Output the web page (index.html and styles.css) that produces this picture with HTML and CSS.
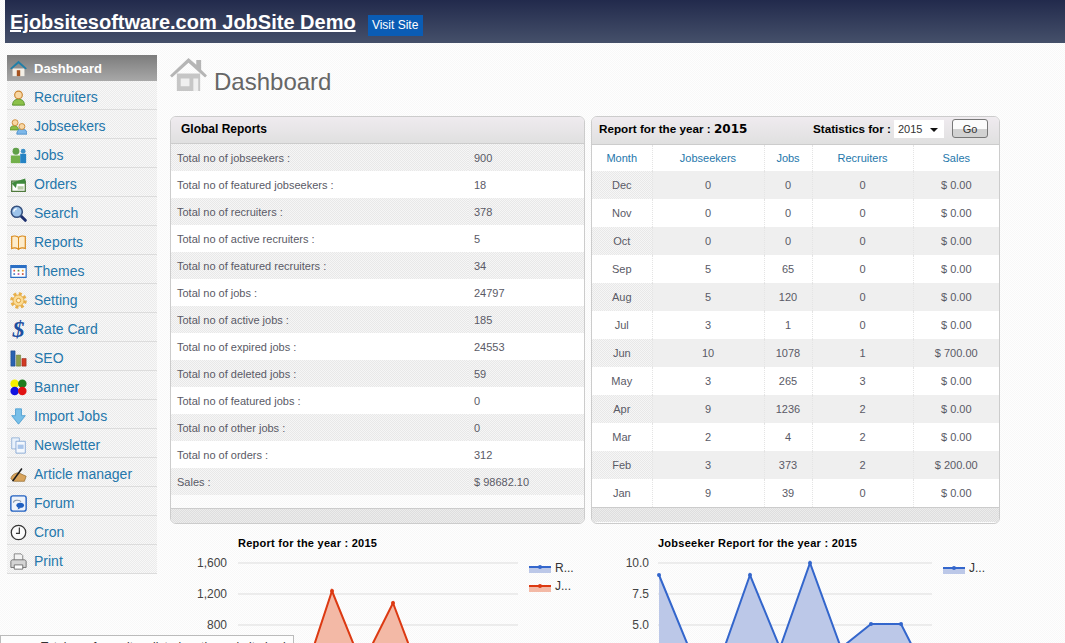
FILE: index.html
```html
<!DOCTYPE html>
<html lang="en">
<head>
<meta charset="utf-8">
<title>Dashboard</title>
<link rel="stylesheet" href="styles.css">
</head>
<body>
<header class="topbar">
  <a class="brand" href="#">Ejobsitesoftware.com JobSite Demo</a>
  <a class="visit" href="#">Visit Site</a>
</header>
<div class="layout">
  <nav class="sidebar">
    <a class="nav-item active" href="#"><svg class="ico" viewBox="0 0 20 20"><path d="M3 10h14v9H3z" fill="#f2efe6"/><path d="M8 12h4v7H8z" fill="#a5521f"/><path d="M0 10 10 1l10 9-2 1-8-7-8 7z" fill="#1f7fa8"/></svg><span>Dashboard</span></a>
    <a class="nav-item" href="#"><svg class="ico" viewBox="0 0 20 20"><path d="M3 19c0-5 3-7 7-7s7 2 7 7z" fill="#8cc14a" stroke="#4f8a22"/><circle cx="10" cy="7" r="4.500" fill="#f8d7a4" stroke="#c9822c" stroke-width="1.300"/></svg><span>Recruiters</span></a>
    <a class="nav-item" href="#"><svg class="ico" viewBox="0 0 20 20"><path d="M0 14c0-3 2-5 5-5s5 2 5 5z" fill="#8dbd45" stroke="#5e9127"/><circle cx="6" cy="5.500" r="3.500" fill="#f8d7a4" stroke="#c9822c"/><path d="M8 19c0-4 2-6 6-6s6 2 6 6z" fill="#7db8ea" stroke="#4a8cc8"/><circle cx="14" cy="10" r="3.500" fill="#f8d7a4" stroke="#c9822c"/></svg><span>Jobseekers</span></a>
    <a class="nav-item" href="#"><svg class="ico" viewBox="0 0 20 20"><path d="M1 10h11v9H1z" fill="#72b04a"/><circle cx="7" cy="5" r="4" fill="#5f9f48"/><path d="M12 8h7v11h-7z" fill="#2583c4"/><circle cx="15.500" cy="5" r="2.800" fill="#3a8fc8"/></svg><span>Jobs</span></a>
    <a class="nav-item" href="#"><svg class="ico" viewBox="0 0 20 20"><path d="M2 6h16v12H2z" fill="#fff" stroke="#4f7a3c" stroke-width="1.500"/><path d="M2 8 18 3v6L8 9l-1 5-4-4z" fill="#3f8a3c"/><path d="M9 12h7v4H9z" fill="#b9cfa8"/></svg><span>Orders</span></a>
    <a class="nav-item" href="#"><svg class="ico" viewBox="0 0 20 20"><path d="m12 12 6 6" stroke="#1c2f6e" stroke-width="3.500" stroke-linecap="round"/><circle cx="8" cy="8" r="6.500" fill="#9cc3ea" stroke="#34507e" stroke-width="1.800"/><path d="M4.500 8A3.500 3.500 0 0 1 8 4.500" fill="none" stroke="#fff" stroke-width="1.300"/></svg><span>Search</span></a>
    <a class="nav-item" href="#"><svg class="ico" viewBox="0 0 20 20"><path d="M10 4C8 2 4 2 2 3v14c2-1 6-1 8 1 2-2 6-2 8-1V3c-2-1-6-1-8 1z" fill="#fdeccb" stroke="#d98a1c" stroke-width="1.400"/><path d="M10 4v14" stroke="#d98a1c" stroke-width="1.200"/></svg><span>Reports</span></a>
    <a class="nav-item" href="#"><svg class="ico" viewBox="0 0 20 20"><path d="M1 3h18v14H1z" fill="#fff" stroke="#2a6ec4" stroke-width="1.400"/><path d="M1 3h18v3H1z" fill="#2a6ec4"/><path d="M4 8h2v2H4z" fill="#d9534f"/><path d="M9 8h2v2H9z" fill="#5a8f3c"/><path d="M14 8h2v2h-2z" fill="#e0a030"/><path d="M4 12h2v2H4z" fill="#4a7fc4"/><path d="M9 12h2v2H9z" fill="#c04fa0"/><path d="M14 12h2v2h-2z" fill="#c9503c"/></svg><span>Themes</span></a>
    <a class="nav-item" href="#"><svg class="ico" viewBox="0 0 20 20"><circle cx="10" cy="10" r="8" fill="none" stroke="#e8b04a" stroke-width="3.500" stroke-dasharray="3.500 2.800"/><circle cx="10" cy="10" r="6.500" fill="#fbdc95" stroke="#e0a23a"/><circle cx="10" cy="10" r="2.500" fill="#fff3cf" stroke="#d8952a"/></svg><span>Setting</span></a>
    <a class="nav-item" href="#"><i class="dollar">$</i><span>Rate Card</span></a>
    <a class="nav-item" href="#"><svg class="ico" viewBox="0 0 20 20"><path d="M1 1h5v18H1z" fill="#2a62b0" stroke="#1b4480" stroke-width=".6"/><path d="M7.500 6h5v13h-5z" fill="#8c9f4a" stroke="#5f6f2a" stroke-width=".6"/><path d="M14 10h5v9h-5z" fill="#d23a24" stroke="#8f2414" stroke-width=".6"/></svg><span>SEO</span></a>
    <a class="nav-item" href="#"><svg class="ico" viewBox="0 0 20 20"><circle cx="5.500" cy="5.500" r="5" fill="#f4f000"/><circle cx="14.500" cy="5.500" r="5" fill="#1f7d1f"/><circle cx="5.500" cy="14" r="5" fill="#1212e0"/><circle cx="14.500" cy="14" r="5" fill="#e01212"/></svg><span>Banner</span></a>
    <a class="nav-item" href="#"><svg class="ico" viewBox="0 0 20 20"><path d="M6.500 1h7v8H18l-8 10-8-10h4.500z" fill="#78bfe8" stroke="#4c9dd0"/></svg><span>Import Jobs</span></a>
    <a class="nav-item" href="#"><svg class="ico" viewBox="0 0 20 20"><path d="M2 1h9v13H2z" fill="#e9f1fb" stroke="#8eaed6"/><path d="M7 5h11v14H7z" fill="#f4f8fd" stroke="#7ea2d2"/><path d="M9 9h7v5H9z" fill="#a9c5ea"/></svg><span>Newsletter</span></a>
    <a class="nav-item" href="#"><svg class="ico" viewBox="0 0 20 20"><path d="M1 15c1-5 6-7 9-7l9 4-2 6H5z" fill="#d9a45c" stroke="#8f6528" stroke-width=".8"/><path d="m3 18 11-15" stroke="#1a1a1a" stroke-width="1.800"/></svg><span>Article manager</span></a>
    <a class="nav-item" href="#"><svg class="ico" viewBox="0 0 20 20"><rect x="1" y="1" width="18" height="18" rx="2.500" fill="#eef3fa" stroke="#1f5fc0" stroke-width="1.600"/><path d="M4 9c0-3 7-4 9-1" fill="none" stroke="#8a97a8" stroke-width="1.200"/><ellipse cx="12" cy="12" rx="4.500" ry="3" fill="#1f5fc0"/><path d="m10 14-1 3 4-2z" fill="#1f5fc0"/></svg><span>Forum</span></a>
    <a class="nav-item" href="#"><svg class="ico" viewBox="0 0 20 20"><circle cx="10" cy="10" r="8.500" fill="#fbfbfb" stroke="#333" stroke-width="1.500"/><path d="M11 4v7H7" fill="none" stroke="#333" stroke-width="1.400"/></svg><span>Cron</span></a>
    <a class="nav-item" href="#"><svg class="ico" viewBox="0 0 20 20"><path d="M5 1h8l2 2v6H5z" fill="#f2f2f2" stroke="#777"/><path d="M1 10c0-1 1-2 2-2h14c1 0 2 1 2 2v7H1z" fill="#d4d4d4" stroke="#666"/><path d="M5 14h10v5H5z" fill="#fff" stroke="#666"/></svg><span>Print</span></a>
  </nav>
  <main class="content">
    <h1 class="page-title"><svg class="title-ico" viewBox="0 0 38 36"><path d="M7 17h24v18H7z" fill="#c6c6c6"/><path d="M11 22h9v8h-9zM24 22h5v13h-5z" fill="#efefef"/><path d="M0 19 19 1l8 7V3h5v10l6 6-2 2L19 6 2 21z" fill="#b5b5b5"/></svg><span>Dashboard</span></h1>
    <div class="panels">
      <section class="panel panel-left">
        <h2 class="panel-head">Global Reports</h2>
        <table class="report">
          <tr><td>Total no of jobseekers :</td><td>900</td></tr>
          <tr><td>Total no of featured jobseekers :</td><td>18</td></tr>
          <tr><td>Total no of recruiters :</td><td>378</td></tr>
          <tr><td>Total no of active recruiters :</td><td>5</td></tr>
          <tr><td>Total no of featured recruiters :</td><td>34</td></tr>
          <tr><td>Total no of jobs :</td><td>24797</td></tr>
          <tr><td>Total no of active jobs :</td><td>185</td></tr>
          <tr><td>Total no of expired jobs :</td><td>24553</td></tr>
          <tr><td>Total no of deleted jobs :</td><td>59</td></tr>
          <tr><td>Total no of featured jobs :</td><td>0</td></tr>
          <tr><td>Total no of other jobs :</td><td>0</td></tr>
          <tr><td>Total no of orders :</td><td>312</td></tr>
          <tr><td>Sales :</td><td>$ 98682.10</td></tr>
        </table>
        <div class="panel-spacer"></div>
        <div class="panel-foot"></div>
      </section>
      <section class="panel panel-right">
        <form class="panel-head stats-head">
          <span class="year-label">Report for the year : <b class="year">2015</b></span>
          <label class="stats-label">Statistics for :</label>
          <span class="select-wrap"><select class="year-select"><option>2015</option></select></span>
          <button class="go" type="button">Go</button>
        </form>
        <table class="stats">
          <colgroup><col class="c1"><col class="c2"><col class="c3"><col class="c4"><col class="c5"></colgroup>
          <thead><tr><th>Month</th><th>Jobseekers</th><th>Jobs</th><th>Recruiters</th><th>Sales</th></tr></thead>
          <tbody>
            <tr><td>Dec</td><td>0</td><td>0</td><td>0</td><td>$ 0.00</td></tr>
            <tr><td>Nov</td><td>0</td><td>0</td><td>0</td><td>$ 0.00</td></tr>
            <tr><td>Oct</td><td>0</td><td>0</td><td>0</td><td>$ 0.00</td></tr>
            <tr><td>Sep</td><td>5</td><td>65</td><td>0</td><td>$ 0.00</td></tr>
            <tr><td>Aug</td><td>5</td><td>120</td><td>0</td><td>$ 0.00</td></tr>
            <tr><td>Jul</td><td>3</td><td>1</td><td>0</td><td>$ 0.00</td></tr>
            <tr><td>Jun</td><td>10</td><td>1078</td><td>1</td><td>$ 700.00</td></tr>
            <tr><td>May</td><td>3</td><td>265</td><td>3</td><td>$ 0.00</td></tr>
            <tr><td>Apr</td><td>9</td><td>1236</td><td>2</td><td>$ 0.00</td></tr>
            <tr><td>Mar</td><td>2</td><td>4</td><td>2</td><td>$ 0.00</td></tr>
            <tr><td>Feb</td><td>3</td><td>373</td><td>2</td><td>$ 200.00</td></tr>
            <tr><td>Jan</td><td>9</td><td>39</td><td>0</td><td>$ 0.00</td></tr>
          </tbody>
        </table>
        <div class="panel-foot"></div>
      </section>
    </div>
    <div class="charts">
      <svg class="chart chart-left" viewBox="0 0 415 120">
        <text class="chart-title" x="68" y="17">Report for the year : 2015</text>
        <g class="grid"><path d="M68 33H348M68 64H348M68 95H348"/></g>
        <text class="axis" x="57" y="37">1,600</text>
        <text class="axis" x="57" y="68">1,200</text>
        <text class="axis" x="57" y="99">800</text>
        <path class="area-red" d="M70 155 101 129 131 155 162 61 192 135 223 73 254 155Z"/>
        <path class="line-red" d="M70 155 101 129 131 155 162 61 192 135 223 73 254 155"/>
        <circle class="dot-red" cx="162" cy="61" r="2"/><circle class="dot-red" cx="223" cy="73" r="2"/>
        <rect class="swatch-blue" x="359" y="37" width="22" height="6"/><path class="line-blue" d="M359 37h22"/><circle class="dot-blue" cx="370" cy="37" r="2"/>
        <text class="legend" x="385" y="42">R...</text>
        <rect class="swatch-red" x="359" y="56" width="22" height="6"/><path class="line-red" d="M359 56h22"/><circle class="dot-red" cx="370" cy="56" r="2"/>
        <text class="legend" x="385" y="60">J...</text>
      </svg>
      <svg class="chart chart-right" viewBox="0 0 409 120">
        <text class="chart-title" x="67" y="17">Jobseeker Report for the year : 2015</text>
        <g class="grid"><path d="M67 33H341M67 64H341M67 95H341"/></g>
        <text class="axis" x="58" y="37">10.0</text>
        <text class="axis" x="58" y="68">7.5</text>
        <text class="axis" x="58" y="99">5.0</text>
        <path class="area-blue" d="M68 155V45L98 118 129 130 159 45 189 118 219 33 250 118 280 94 310 94 341 155Z"/>
        <path class="line-blue" d="M68 45 98 118 129 130 159 45 189 118 219 33 250 118 280 94 310 94 341 155"/>
        <circle class="dot-blue" cx="68" cy="45" r="2"/><circle class="dot-blue" cx="159" cy="45" r="2"/><circle class="dot-blue" cx="219" cy="33" r="2"/><circle class="dot-blue" cx="280" cy="94" r="2"/><circle class="dot-blue" cx="310" cy="94" r="2"/>
        <rect class="swatch-blue" x="352" y="38" width="22" height="6"/><path class="line-blue" d="M352 38h22"/><circle class="dot-blue" cx="363" cy="38" r="2"/>
        <text class="legend" x="378" y="42">J...</text>
      </svg>
    </div>
  </main>
</div>
<div class="tip">Total no of recruiters listed on the website is shown</div>
</body>
</html>
```
FILE: styles.css
```css
* { box-sizing: border-box; }
html, body { margin: 0; height: 643px; overflow: hidden; }
body {
  font-family: "Liberation Sans", Arial, sans-serif;
  background: repeating-conic-gradient(#fefefe 0 25%, #f8f8f8 0 50%) 0 0 / 2px 2px;
  color: #555;
  position: relative;
}
a { text-decoration: none; }

.topbar {
  height: 43px;
  margin-left: 5px;
  padding-left: 5px;
  display: flex;
  align-items: center;
  gap: 12px;
  background: linear-gradient(#222a4c, #45506a);
}
.brand { color: #fff; font-size: 20px; font-weight: 700; text-decoration: underline; margin-top: 2px; }
.visit {
  background: #0a5cb4;
  color: #fff;
  font-size: 12px;
  line-height: 21px;
  padding: 0 4px;
  width: 55px;
  text-align: center;
  margin-top: 7px;
}

.layout { display: flex; padding: 12px 0 0 7px; }
.sidebar { width: 150px; flex: none; display: flex; flex-direction: column; }
.nav-item {
  height: 29px;
  display: flex;
  align-items: center;
  gap: 7px;
  padding: 4px 0 0 3px;
  color: #2577ab;
  font-size: 14px;
  border-bottom: 1px solid #dcdcdc;
  background: repeating-conic-gradient(#ebebeb 0 25%, #f8f8f8 0 50%) 0 0 / 2px 2px;
}
.nav-item.active {
  height: 26px;
  padding-top: 0;
  color: #fff;
  font-weight: 700;
  font-size: 13px;
  border: 0;
  background: linear-gradient(#7c7c7c, #a8a8a8);
}
.ico { width: 17px; height: 17px; flex: none; }
.dollar {
  width: 17px;
  height: 17px;
  flex: none;
  text-align: center;
  font: italic 700 24px/17px "Liberation Serif", serif;
  color: #1d4fa0;
}

.content { margin-left: 13px; width: 830px; flex: none; }
.page-title {
  margin: 2px 0 0;
  height: 59px;
  display: flex;
  align-items: flex-start;
  gap: 7px;
  font-size: 24px;
  font-weight: 400;
  color: #666;
}
.page-title span { margin-top: 11px; }
.title-ico { width: 37px; height: 35px; flex: none; }

.panels { display: flex; gap: 6px; }
.panel {
  height: 408px;
  border: 1px solid #ccc;
  border-radius: 6px;
  display: flex;
  flex-direction: column;
  overflow: hidden;
}
.panel-left { width: 415px; }
.panel-right { width: 409px; }
.panel-head {
  margin: 0;
  height: 28px;
  flex: none;
  display: flex;
  align-items: center;
  padding: 0 0 4px 10px;
  font-size: 12px;
  font-weight: 700;
  color: #000;
  border-bottom: 1px solid #ccc;
  background: linear-gradient(#efebef, #e0e0e0);
}
.panel-left .panel-head { height: 27px; padding-bottom: 3px; }
.panel-spacer { flex: 1; }
.panel-foot {
  height: 15px;
  flex: none;
  border-top: 1px solid #ccc;
  background: repeating-conic-gradient(#dedede 0 25%, #ececec 0 50%) 0 0 / 2px 2px;
}

.report { width: 100%; border-collapse: collapse; table-layout: fixed; font-size: 11px; color: #5a5a66; }
.report td { height: 27px; padding: 0 0 0 6px; }
.report td:first-child { width: 297px; }
.report tr:nth-child(odd) td, .stats tbody tr:nth-child(odd) td {
  background: repeating-conic-gradient(#e8e8e8 0 25%, #f6f6f6 0 50%) 0 0 / 2px 2px;
}
.report tr:nth-child(even) td, .stats tbody tr:nth-child(even) td { background: #fff; }

.stats-head { padding-left: 7px; font-size: 11.7px; }
.year-label { width: 214px; }
.year { font-family: "DejaVu Sans", sans-serif; font-size: 12px; }
.stats-label { width: 81px; }
.select-wrap { position: relative; width: 50px; height: 18px; margin-right: 8px; }
.select-wrap::after {
  content: "";
  position: absolute;
  right: 6px;
  top: 8px;
  border: 4px solid transparent;
  border-top-color: #111;
  border-bottom: 0;
}
.year-select {
  appearance: none;
  width: 50px;
  height: 18px;
  border: 0;
  background: #fff;
  font: 11px "Liberation Sans", Arial, sans-serif;
  padding: 0 0 0 4px;
  color: #333;
}
.go {
  width: 36px;
  height: 19px;
  border: 1px solid #777;
  border-radius: 3px;
  background: linear-gradient(#fbfbfb 50%, #d2d2d2 50%);
  font: 11px "Liberation Sans", Arial, sans-serif;
  color: #333;
  padding: 0;
}

.stats { width: 100%; border-collapse: collapse; table-layout: fixed; font-size: 11px; text-align: center; color: #5a5a66; background: #fff; }
.c1 { width: 60px; } .c2 { width: 112px; } .c3 { width: 48px; } .c4 { width: 101px; } .c5 { width: 86px; }
.stats th { height: 26px; font-weight: 400; color: #2577ab; background: #fff; }
.stats td { height: 28px; padding: 0; }
.stats th + th, .stats td + td { border-left: 1px dotted #e4e4e4; }

.charts { display: flex; gap: 6px; margin-top: 6px; }
.chart { display: block; height: 120px; flex: none; overflow: hidden; }
.chart-left { width: 415px; }
.chart-right { width: 409px; }
.chart-title { font: 700 11px "Liberation Sans", Arial, sans-serif; fill: #000; letter-spacing: .25px; }
.axis { font: 12px "Liberation Sans", Arial, sans-serif; fill: #444; text-anchor: end; }
.legend { font: 12px "Liberation Sans", Arial, sans-serif; fill: #333; }
.grid path { stroke: #ddd; stroke-width: 1; fill: none; }
.area-red { fill: #f3b9a6; stroke: none; }
.area-blue { fill: #bcc8e8; stroke: none; }
.line-red { fill: none; stroke: #dc3912; stroke-width: 2; }
.line-blue { fill: none; stroke: #3366cc; stroke-width: 2; }
.dot-red { fill: #dc3912; }
.dot-blue { fill: #3366cc; }
.swatch-red { fill: #f3b9a6; }
.swatch-blue { fill: #bcc8e8; }

.tip {
  position: absolute;
  left: 0;
  top: 635px;
  width: 294px;
  height: 20px;
  border: 1px solid #bbb;
  background: #fdfdfd;
  font-size: 12px;
  color: #333;
  padding: 4px 0 0 40px;
  white-space: nowrap;
  overflow: hidden;
}
```
